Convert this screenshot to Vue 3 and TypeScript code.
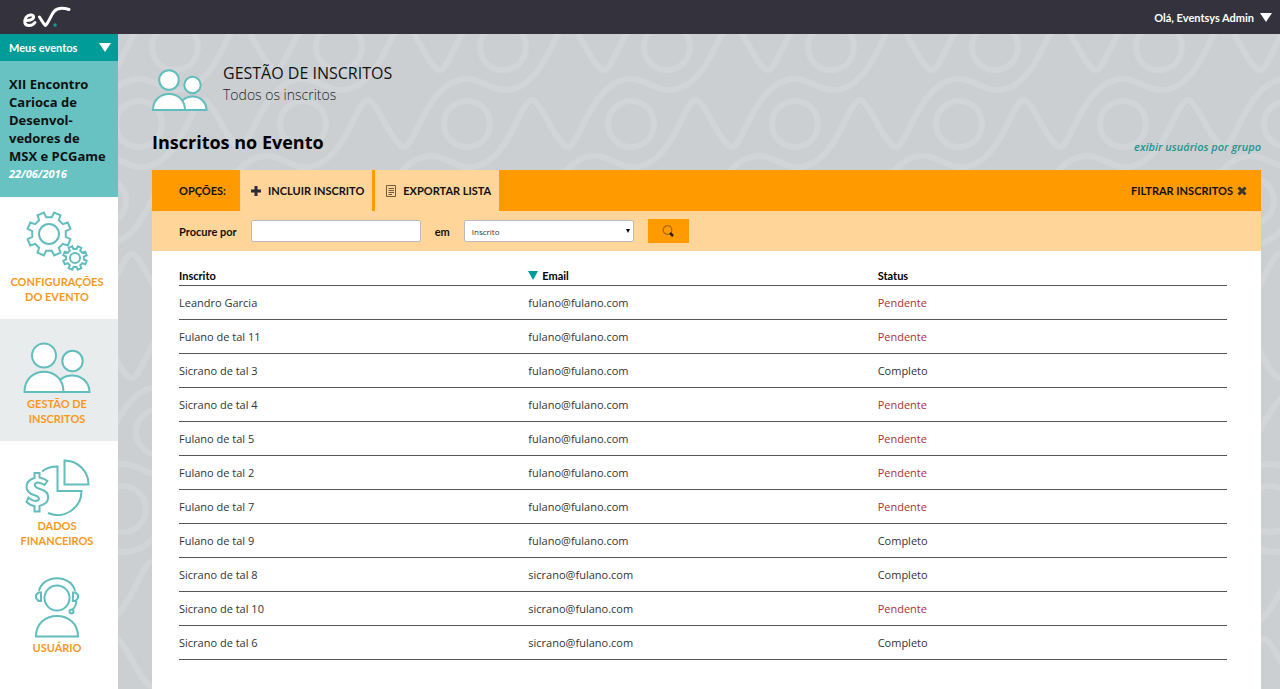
<script setup lang="ts">
import { ref } from 'vue'

interface Subscriber {
  name: string
  email: string
  status: 'Pendente' | 'Completo'
}

const subscribers: Subscriber[] = [
  { name: 'Leandro Garcia', email: 'fulano@fulano.com', status: 'Pendente' },
  { name: 'Fulano de tal 11', email: 'fulano@fulano.com', status: 'Pendente' },
  { name: 'Sicrano de tal 3', email: 'fulano@fulano.com', status: 'Completo' },
  { name: 'Sicrano de tal 4', email: 'fulano@fulano.com', status: 'Pendente' },
  { name: 'Fulano de tal 5', email: 'fulano@fulano.com', status: 'Pendente' },
  { name: 'Fulano de tal 2', email: 'fulano@fulano.com', status: 'Pendente' },
  { name: 'Fulano de tal 7', email: 'fulano@fulano.com', status: 'Pendente' },
  { name: 'Fulano de tal 9', email: 'fulano@fulano.com', status: 'Completo' },
  { name: 'Sicrano de tal 8', email: 'sicrano@fulano.com', status: 'Completo' },
  { name: 'Sicrano de tal 10', email: 'sicrano@fulano.com', status: 'Pendente' },
  { name: 'Sicrano de tal 6', email: 'sicrano@fulano.com', status: 'Completo' },
]

const query = ref('')
const field = ref('Inscrito')

// Outline of a gear centred on the origin.
function gear(teeth: number, outer: number, inner: number): string {
  const step = (Math.PI * 2) / teeth
  const points: string[] = []
  for (let i = 0; i < teeth; i++) {
    const a = i * step + step / 2
    const corners: [number, number][] = [
      [inner, -0.29],
      [outer, -0.2],
      [outer, 0.2],
      [inner, 0.29],
    ]
    for (const [r, k] of corners) {
      const t = a + k * step
      points.push(`${(r * Math.cos(t)).toFixed(2)} ${(r * Math.sin(t)).toFixed(2)}`)
    }
  }
  return `M${points.join('L')}Z`
}

const bigGear = gear(8, 22, 17)
const smallGear = gear(8, 12, 9)

// The backdrop motif repeats 164px across; each row sits 77px lower and 36px to the left.
const motifs: { x: number; y: number }[] = []
for (let row = -1; row < 14; row++) {
  for (let col = -2; col < 20; col++) {
    motifs.push({ x: 57 + col * 164 - row * 36, y: 13 + row * 77 })
  }
}
</script>

<template>
  <div class="app">
    <header class="topbar">
      <a href="#" class="logo" aria-label="ev">
        <svg width="50" height="24" viewBox="0 0 50 24" fill="none" stroke="#fff" stroke-width="3" stroke-linecap="round" stroke-linejoin="round">
          <path d="M3 15.500C8 16 12 14 11.500 11.500C11 9 6 9.500 4 12.500C1.500 16.500 2.500 20.500 7 20.500C10 20.500 12 19 13 17.500" />
          <path d="M17.500 12C19.500 15 21.500 19 23.500 20.500C27 17 29 10 32 6.500C35 3 40 2.500 47 4.500" />
          <circle cx="33" cy="20" r="1" stroke="#0aa39c" stroke-width="1.500" />
        </svg>
      </a>
      <button type="button" class="account">Olá, Eventsys Admin <span class="caret"></span></button>
    </header>

    <div class="body">
      <aside class="sidebar">
        <button type="button" class="my-events">Meus eventos <span class="caret"></span></button>
        <div class="event">
          <strong>XII Encontro<br />Carioca de<br />Desenvol-<br />vedores de<br />MSX e PCGame</strong>
          <em>22/06/2016</em>
        </div>
        <nav>
          <a href="#" class="nav-item">
            <svg width="70" height="62" viewBox="0 0 70 62" class="line-icon">
              <g transform="translate(27 24)"><path :d="bigGear" /><circle r="10" /></g>
              <g transform="translate(53 48)"><path :d="smallGear" /><circle r="5" /></g>
            </svg>
            <span>CONFIGURAÇÕES<br />DO EVENTO</span>
          </a>
          <a href="#" class="nav-item active">
            <svg width="70" height="62" viewBox="0 0 70 62" class="line-icon filled">
              <circle cx="50.500" cy="29" r="10.200" /><path d="M33 60C33 38 67 38 67.500 60Z" />
              <circle cx="22" cy="23.500" r="12" /><path d="M2.500 60C2.500 33 41.500 33 41.500 60Z" />
            </svg>
            <span>GESTÃO DE<br />INSCRITOS</span>
          </a>
          <a href="#" class="nav-item">
            <svg width="70" height="62" viewBox="0 0 70 62" class="line-icon">
              <path d="M42.500 6.500V30.500H66.500A24 24 0 0 0 42.500 6.500Z" />
              <path d="M20 17.500C24 14 29 12.500 35.500 12.500V37H59.500A24 24 0 0 1 26 59" />
              <path d="M12.500 19V24C2 27 2 38 12 41C19 43 18 47 13.500 47C10 47 8.500 45 6.500 43.500L4.500 48C7 50.500 9.500 51.500 12.500 52V57.500H17.500V52C29 49 29 38 18 35C11 33 12 29 15.500 28.500C19 28.500 20.500 30 22.500 31L25.500 27C23 25 20 24 17.500 23.500V19Z" />
            </svg>
            <span>DADOS<br />FINANCEIROS</span>
          </a>
          <a href="#" class="nav-item">
            <svg width="70" height="62" viewBox="0 0 70 62" class="line-icon">
              <circle cx="35" cy="22" r="12.500" />
              <path d="M14 60.500C14 33 56 33 56 60.500Z" />
              <path d="M17 15C21 -2 49 -2 53 15" />
              <path d="M19 16.500H16.500L14 19V22L16.500 25H19Z" />
              <path d="M51 16.500H53.500L56 19V22L53.500 25H51Z" />
              <path d="M54.500 25C54 29 53 31.500 50.500 33.500" /><circle cx="49.500" cy="35.500" r="2" />
            </svg>
            <span>USUÁRIO</span>
          </a>
        </nav>
      </aside>

      <main class="content">
        <svg class="backdrop" aria-hidden="true">
          <defs>
            <g id="motif">
              <circle r="23" />
              <path d="M-36 32C-20 32 -14 43 2 43C42 43 52 -24 65 -24C74 -24 90 23 101 23C112 23 125 -45 164 -45" />
            </g>
          </defs>
          <use v-for="(m, i) in motifs" :key="i" href="#motif" :x="m.x" :y="m.y" />
        </svg>

        <div class="page">
          <div class="page-head">
            <svg width="56" height="44" viewBox="0 0 56 44" class="line-icon filled">
              <circle cx="40.500" cy="17" r="8.200" /><path d="M27 42C27 24 54 24 54.500 42Z" />
              <circle cx="17" cy="12" r="9.800" /><path d="M1 42C1 20.500 33 20.500 33 42Z" />
            </svg>
            <div>
              <h1>GESTÃO DE INSCRITOS</h1>
              <p>Todos os inscritos</p>
            </div>
          </div>

          <div class="section-head">
            <h2>Inscritos no Evento</h2>
            <a href="#">exibir usuários por grupo</a>
          </div>

          <section class="panel">
            <div class="toolbar">
              <span class="toolbar-label">OPÇÕES:</span>
              <button type="button" class="tab">
                <svg width="12" height="12" viewBox="0 0 12 12"><path d="M6 1V11M1 6H11" stroke="#2e2b38" stroke-width="3" /></svg>
                INCLUIR INSCRITO
              </button>
              <button type="button" class="tab">
                <svg width="12" height="12" viewBox="0 0 12 12" fill="none" stroke="#75583c"><path d="M1.500 .5H10.500V11.500H1.500Z" /><path d="M3.500 3.500H9M3.500 5.500H9M3.500 7.500H9M3.500 9.500H7" /></svg>
                EXPORTAR LISTA
              </button>
              <button type="button" class="filter">
                FILTRAR INSCRITOS
                <svg width="10" height="10" viewBox="0 0 10 10"><path d="M1.500 1.500L8.500 8.500M8.500 1.500L1.500 8.500" stroke="#39372f" stroke-width="3" /></svg>
              </button>
            </div>

            <form class="search" @submit.prevent>
              <label for="query">Procure por</label>
              <input id="query" v-model="query" type="text" />
              <label for="field">em</label>
              <span class="select">
                <select id="field" v-model="field">
                  <option>Inscrito</option>
                  <option>Email</option>
                  <option>Status</option>
                </select>
              </span>
              <button type="submit" aria-label="Procurar">
                <svg width="12" height="12" viewBox="0 0 12 12" fill="none"><circle cx="5.500" cy="5" r="4.300" stroke="#a9680a" stroke-width="1.200" /><path d="M8 8L11 11" stroke="#2b2312" stroke-width="2.500" /></svg>
              </button>
            </form>

            <div class="table-wrap">
              <table>
                <thead>
                  <tr>
                    <th scope="col">Inscrito</th>
                    <th scope="col"><span class="caret sort"></span>Email</th>
                    <th scope="col">Status</th>
                  </tr>
                </thead>
                <tbody>
                  <tr v-for="s in subscribers" :key="s.name">
                    <td>{{ s.name }}</td>
                    <td>{{ s.email }}</td>
                    <td :class="{ pending: s.status === 'Pendente' }">{{ s.status }}</td>
                  </tr>
                </tbody>
              </table>
            </div>
          </section>
        </div>
      </main>
    </div>
  </div>
</template>

<style>
body {
  margin: 0;
}
</style>

<style scoped>
.app {
  display: flex;
  flex-direction: column;
  min-height: 100vh;
  font-family: 'Open Sans', 'Noto Sans', sans-serif;
  font-size: 11px;
  color: #111;
}
button {
  border: 0;
  padding: 0;
  background: none;
  font: inherit;
  color: inherit;
  cursor: pointer;
}
a {
  text-decoration: none;
}
.caret {
  display: inline-block;
  border: 6px solid transparent;
  border-top: 9px solid #fff;
  border-bottom: 0;
}
.topbar {
  display: flex;
  align-items: center;
  justify-content: space-between;
  height: 34px;
  padding: 0 8px 0 22px;
  background: #33323d;
}
.logo {
  display: flex;
}
.account {
  display: flex;
  align-items: center;
  gap: 6px;
  color: #fff;
}
.account,
.my-events,
.nav-item,
.toolbar,
.search label,
th {
  font-family: Lato, sans-serif;
  font-weight: 700;
}
.body {
  display: flex;
  flex: 1;
}
.sidebar {
  flex: 0 0 118px;
  background: #fff;
}
.my-events {
  display: flex;
  align-items: center;
  justify-content: space-between;
  width: 100%;
  height: 27px;
  padding: 0 7px 0 9px;
  background: #009c97;
  color: #fff;
}
.event {
  display: flex;
  flex-direction: column;
  padding: 14px 9px;
  background: #68c2c2;
}
.event strong {
  font-size: 13px;
  line-height: 18px;
  white-space: nowrap;
}
.event em {
  line-height: 18px;
  color: #fff;
  font-weight: 700;
}
.nav-item {
  display: flex;
  flex-direction: column;
  align-items: center;
  gap: 2px;
  box-sizing: border-box;
  height: 122px;
  padding: 13px 4px 0 0;
  color: #f7981d;
  line-height: 15px;
  text-align: center;
}
.nav-item.active {
  background: #e8eced;
}
.line-icon {
  flex: none;
  fill: none;
  stroke: #62bdbd;
  stroke-width: 2;
}
.line-icon.filled {
  fill: #fff;
}
.content {
  position: relative;
  flex: 1;
  min-width: 0;
  overflow: hidden;
  background: #cccfd1;
}
.backdrop {
  position: absolute;
  inset: 0;
  width: 100%;
  height: 100%;
  fill: none;
  stroke: #d2d5d7;
  stroke-width: 6;
}
.page {
  position: relative;
  display: flex;
  flex-direction: column;
  box-sizing: border-box;
  min-height: 100%;
  padding: 28px 19px 0 34px;
}
.page-head {
  display: flex;
  gap: 15px;
}
.page-head svg {
  margin-top: 6px;
}
h1,
h2,
p {
  margin: 0;
}
h1 {
  font-size: 16px;
  line-height: 22px;
  font-weight: 400;
}
p {
  font-size: 14px;
  line-height: 22px;
  font-weight: 300;
  color: #222;
}
.section-head {
  display: flex;
  align-items: flex-end;
  justify-content: space-between;
  height: 42px;
  margin-bottom: 16px;
}
h2 {
  font-size: 18px;
  line-height: 24px;
  color: #000;
}
.section-head a {
  color: #1c9591;
  font-style: italic;
  font-weight: 600;
  line-height: 14px;
}
.panel {
  flex: 1;
  background: #fff;
}
.toolbar {
  display: flex;
  height: 41px;
  background: #ff9a00;
}
.toolbar-label {
  width: 61px;
  padding-left: 27px;
  line-height: 41px;
}
.tab,
.filter {
  display: flex;
  align-items: center;
  gap: 6px;
}
.tab {
  margin-right: 3px;
  padding: 0 8px 0 10px;
  background: #ffd599;
}
.filter {
  margin-left: auto;
  margin-right: 14px;
  gap: 4px;
}
.search {
  display: flex;
  align-items: center;
  height: 40px;
  padding: 0 27px;
  background: #ffd599;
}
.search input,
.search select {
  box-sizing: border-box;
  width: 170px;
  height: 22px;
  margin: 0 14px;
  border: 1px solid #bbb;
  border-radius: 2px;
  background: #fff;
}
.search select {
  appearance: none;
  padding: 0 7px;
  font: 8px 'Open Sans', sans-serif;
  color: #333;
}
.select {
  position: relative;
  display: flex;
}
.select::after {
  content: '';
  position: absolute;
  right: 18px;
  top: 9px;
  border: 2px solid transparent;
  border-top: 4px solid #000;
  border-bottom: 0;
}
.search button {
  display: flex;
  align-items: center;
  justify-content: center;
  width: 41px;
  height: 24px;
  background: #ff9a00;
}
.table-wrap {
  padding: 14px 34px 29px 27px;
}
table {
  width: 100%;
  table-layout: fixed;
  border-collapse: collapse;
}
th,
td {
  padding: 0;
  border-bottom: 1px solid #555;
  text-align: left;
}
th {
  height: 20px;
  color: #000;
}
td {
  height: 33px;
  color: #333;
}
.pending {
  color: #a83232;
}
.sort {
  margin-right: 4px;
  border-width: 9px 5px 0;
  border-top-color: #009c97;
}
</style>
